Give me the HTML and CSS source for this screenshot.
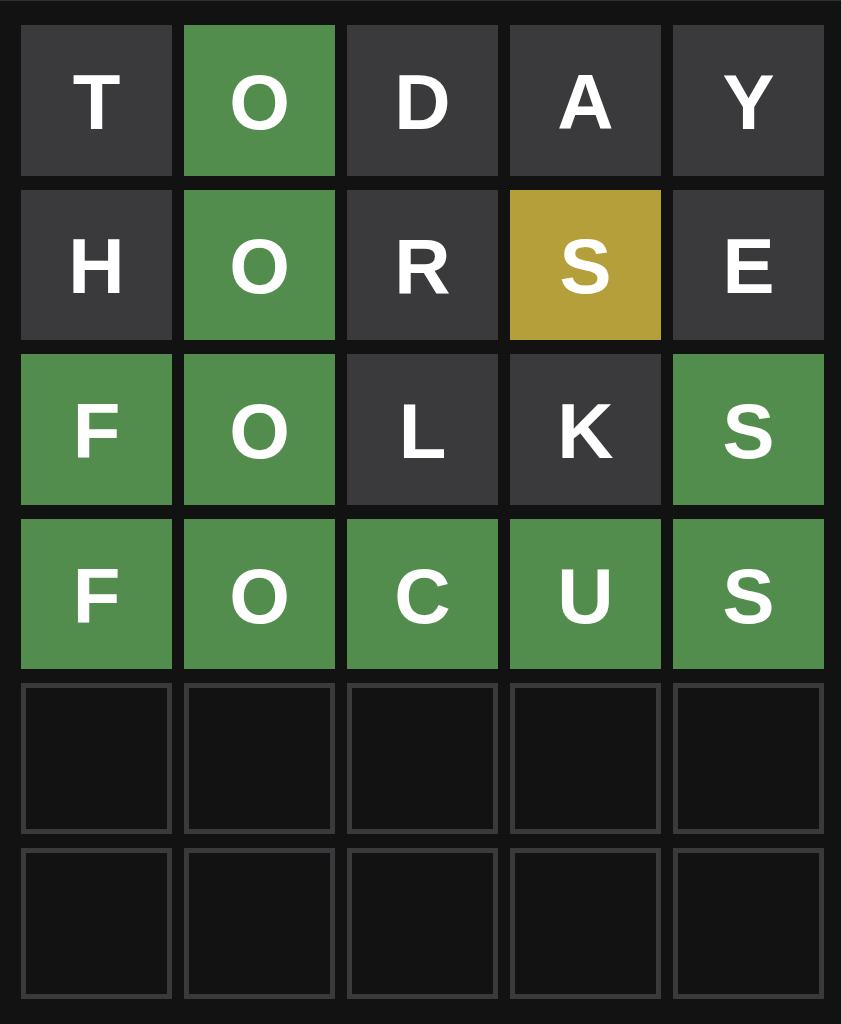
FILE: index.html
```html
<!DOCTYPE html>
<html lang="en">
<head>
  <meta charset="UTF-8" />
  <meta name="viewport" content="width=device-width, initial-scale=1.0"/>
  <title>Wordle Board</title>
  <link rel="stylesheet" href="styles.css">
</head>
<body>
  <div class="board">
    <div class="tile absent">T</div>
    <div class="tile correct">O</div>
    <div class="tile absent">D</div>
    <div class="tile absent">A</div>
    <div class="tile absent">Y</div>

    <div class="tile absent">H</div>
    <div class="tile correct">O</div>
    <div class="tile absent">R</div>
    <div class="tile present">S</div>
    <div class="tile absent">E</div>

    <div class="tile correct">F</div>
    <div class="tile correct">O</div>
    <div class="tile absent">L</div>
    <div class="tile absent">K</div>
    <div class="tile correct">S</div>

    <div class="tile correct">F</div>
    <div class="tile correct">O</div>
    <div class="tile correct">C</div>
    <div class="tile correct">U</div>
    <div class="tile correct">S</div>

    <div class="tile empty"></div>
    <div class="tile empty"></div>
    <div class="tile empty"></div>
    <div class="tile empty"></div>
    <div class="tile empty"></div>

    <div class="tile empty"></div>
    <div class="tile empty"></div>
    <div class="tile empty"></div>
    <div class="tile empty"></div>
    <div class="tile empty"></div>
  </div>
</body>
</html>
```

FILE: styles.css
```css
html, body {
  height: 100%;
}
body {
  margin: 0;
  background: #121213;
  border-top: 1px solid #2f2f30;
  box-sizing: border-box;
  font-family: "Liberation Sans", Arial, sans-serif;
}
.board {
  display: grid;
  grid-template-columns: repeat(5, 151px);
  grid-template-rows: repeat(6, 150.6px);
  column-gap: 12px;
  row-gap: 14px;
  padding: 24px 0 0 21px;
}
.tile {
  display: flex;
  align-items: center;
  justify-content: center;
  box-sizing: border-box;
  padding-top: 4px;
  color: #fff;
  font-size: 78px;
  font-weight: bold;
}
.absent {
  background: #3a3a3c;
}
.correct {
  background: #538d4e;
}
.present {
  background: #b59f3b;
}
.empty {
  border: 5px solid #3a3a3c;
}
```
